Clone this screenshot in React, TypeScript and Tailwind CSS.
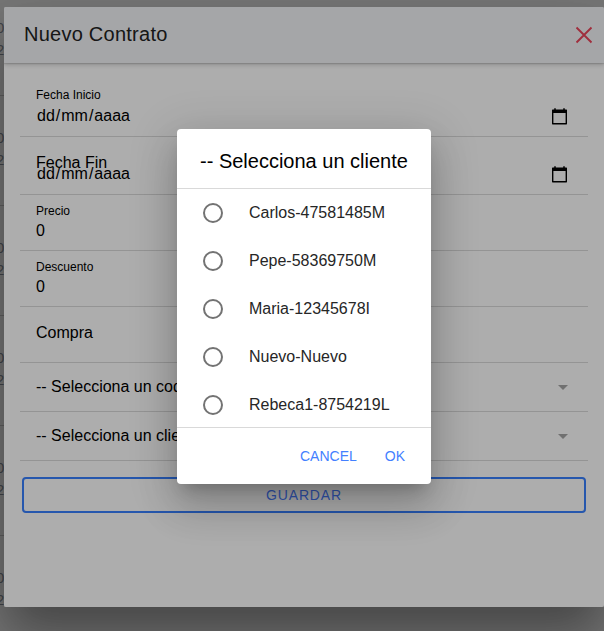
import React from "react";

const clients = [
  "Carlos-47581485M",
  "Pepe-58369750M",
  "Maria-12345678I",
  "Nuevo-Nuevo",
  "Rebeca1-8754219L",
];

function CalendarIcon() {
  return (
    <svg width="15" height="17" viewBox="0 0 15 17" className="mt-0.5 block shrink-0">
      <path d="M2 .3h2V2H2zM11 .3h2V2h-2z" fill="#000" fillOpacity=".75" />
      <path d="M.5 1.4h14l.5.5v14l-.5.5H.5l-.5-.5v-14zM1.4 5v10h12.2V5z" fill="#000" fillRule="evenodd" />
    </svg>
  );
}

function DatePlaceholder() {
  return (
    <div className="flex h-[19px] items-center justify-between pr-[5px] text-base leading-[19px]">
      <div className="flex">
        <span className="px-px">dd</span>
        <span>/</span>
        <span className="px-px">mm</span>
        <span>/</span>
        <span className="px-px">aaaa</span>
      </div>
      <CalendarIcon />
    </div>
  );
}

function NumberRow({ label, value }: { label: string; value: string }) {
  return (
    <div className="h-14 border-b border-[#dbdbdb] px-4 pt-[9px]">
      <div className="text-xs leading-[14px]">{label}</div>
      <div className="mt-[3px] text-base leading-[19px]">{value}</div>
    </div>
  );
}

function SelectRow({ label }: { label: string }) {
  return (
    <div className="flex h-[49px] items-center justify-between border-b border-[#dbdbdb] pr-5 pl-4">
      <span className="text-base leading-5">{label}</span>
      <svg width="10" height="5" viewBox="0 0 10 5" className="mt-px">
        <path d="M0 0h10L5 5z" fill="#a5a5a5" />
      </svg>
    </div>
  );
}

function BackgroundList() {
  return (
    <div className="absolute inset-0 overflow-hidden text-[15px] leading-[22px] text-[#8f969f]">
      {[0, 1, 2, 3, 4, 5].map((i) => (
        <div key={i} className={`-ml-1 border-b border-[#d0d0d0] ${i === 0 ? "h-24 pt-[17px]" : "h-[110px] pt-[31px]"}`}>
          <div>0</div>
          <div>2</div>
        </div>
      ))}
    </div>
  );
}

function ContractModal() {
  return (
    <div className="absolute top-[7px] left-1 h-[600px] w-[600px] overflow-hidden rounded-[2px] bg-white">
      <header className="relative flex h-14 items-center justify-between bg-[#f4f5f8] pr-2 pl-5 shadow-[0_1px_1px_rgba(0,0,0,0.1),0_2px_4px_rgba(0,0,0,0.18)]">
        <h1 className="-mt-0.5 text-xl leading-6 font-normal tracking-[0.0125em] text-[#222]">Nuevo Contrato</h1>
        <svg width="24" height="24" viewBox="0 0 24 24">
          <path d="M4.5 4.5l15 15m0-15l-15 15" stroke="#eb445a" strokeWidth="1.9" />
        </svg>
      </header>
      <form className="p-4">
        <div className="h-[58px] border-b border-[#dbdbdb] px-4 pt-[9px]">
          <div className="text-xs leading-[14px]">Fecha Inicio</div>
          <div className="mt-1">
            <DatePlaceholder />
          </div>
        </div>
        <div className="h-[58px] border-b border-[#dbdbdb] px-4 pt-[16px]">
          <div className="text-base leading-[19px]">Fecha Fin</div>
          <div className="-mt-2">
            <DatePlaceholder />
          </div>
        </div>
        <NumberRow label="Precio" value="0" />
        <NumberRow label="Descuento" value="0" />
        <div className="flex h-14 items-center border-b border-[#dbdbdb] px-4 text-base leading-5">
          <span className="-mt-1">Compra</span>
        </div>
        <SelectRow label="-- Selecciona un codigo" />
        <SelectRow label="-- Selecciona un cliente" />
        <button
          type="button"
          className="mx-0.5 mt-4 block h-9 w-[564px] rounded-[4px] border-2 border-[#3880ff] text-sm leading-4 tracking-[0.06em] text-[#4a7dff]"
        >
          GUARDAR
        </button>
      </form>
    </div>
  );
}

function ClientAlert() {
  return (
    <div className="absolute top-[129px] left-[177px] flex h-[355px] w-[254px] flex-col overflow-hidden rounded-[4px] bg-white shadow-[0_11px_15px_-7px_rgba(0,0,0,0.2),0_24px_38px_3px_rgba(0,0,0,0.14),0_9px_46px_8px_rgba(0,0,0,0.12)]">
      <h2 className="h-[59px] shrink-0 pt-5 pl-[23px] text-xl leading-6 font-normal whitespace-nowrap text-black">
        -- Selecciona un cliente
      </h2>
      <div className="h-60 shrink-0 overflow-hidden border-y border-[#d9d9d9]">
        {clients.map((name) => (
          <div key={name} className="flex h-12 items-center gap-[26px] pl-[26px]">
            <span className="h-5 w-5 rounded-full border-2 border-[#737373]" />
            <span className="text-base leading-5 text-[#262626]">{name}</span>
          </div>
        ))}
      </div>
      <div className="flex flex-1 items-center justify-end gap-7 pr-[26px] text-sm leading-4 text-[#4380ff]">
        <button type="button">CANCEL</button>
        <button type="button">OK</button>
      </div>
    </div>
  );
}

export default function App() {
  return (
    <div className="relative h-[631px] w-[604px] overflow-hidden bg-white font-['Liberation_Sans',Arial,sans-serif] text-black">
      <BackgroundList />
      <div className="absolute inset-0 bg-black/32" />
      <div className="absolute top-[7px] left-1 h-[600px] w-[600px] shadow-[0_28px_48px_rgba(0,0,0,0.4)]" />
      <ContractModal />
      <div className="absolute inset-0 bg-black/32" />
      <ClientAlert />
    </div>
  );
}
